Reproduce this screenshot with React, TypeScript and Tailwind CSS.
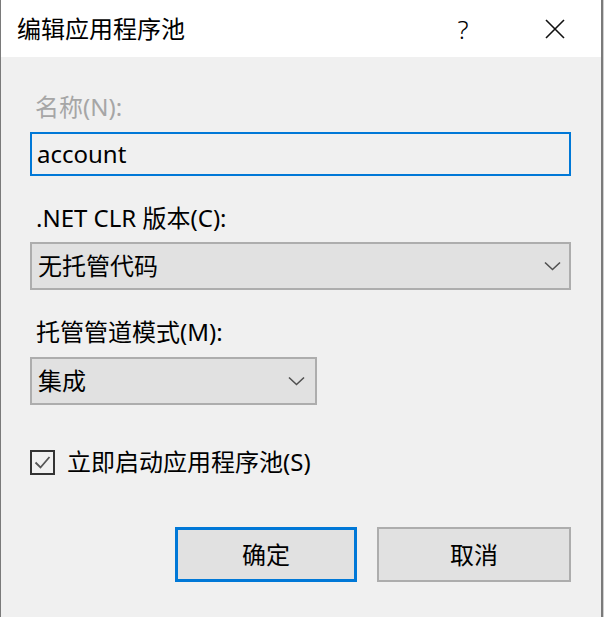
import React from "react";

const font = {
  fontFamily: '"Noto Sans", "Noto Sans CJK SC", sans-serif',
};

function Chevron() {
  return (
    <svg width="17" height="10" viewBox="0 0 17 10" fill="none">
      <polyline points="1,1.5 8.5,8.5 16,1.5" stroke="#505050" strokeWidth="1.6" />
    </svg>
  );
}

export default function App() {
  return (
    <div className="flex w-[604px] h-[617px] bg-[#f0f0f0]" style={font}>
      <div className="w-[1px] bg-[#7a7a7a]" />
      <div className="flex flex-col w-[600px]">
        {/* title bar */}
        <div className="h-[57px] bg-white flex items-center text-[24px] text-black">
          <div className="pl-[16px] flex-1 leading-[32px] pt-[1px]">编辑应用程序池</div>
          <div className="w-[20px] flex justify-center mr-[72px] text-[26px] leading-[32px] font-light">?</div>
          <div className="w-[20px] mr-[36px] flex items-center justify-center">
            <svg width="20" height="20" viewBox="0 0 20 20">
              <path d="M1 1 L19 19 M19 1 L1 19" stroke="#111" strokeWidth="1.6" />
            </svg>
          </div>
        </div>
        {/* body */}
        <div className="flex-1 flex flex-col pl-[29px] pr-[30px] pt-[34px] text-[24px] leading-[32px]">
          <div className="pl-[5px] text-[#a6a6a6]">名称(N):</div>
          <div className="mt-[9px] h-[44px] border-2 border-[#0078d7] flex items-center pl-[5px] text-black">
            account
          </div>
          <div className="mt-[26px] pl-[6px] text-black">.NET CLR 版本(C):</div>
          <div className="mt-[8px] h-[48px] border-2 border-[#adadad] bg-[#e1e1e1] flex items-center pl-[6px] pr-[8px] text-black">
            <span className="flex-1">无托管代码</span>
            <Chevron />
          </div>
          <div className="mt-[26px] pl-[6px] text-black">托管管道模式(M):</div>
          <div className="mt-[9px] w-[287px] h-[48px] border-2 border-[#adadad] bg-[#e1e1e1] flex items-center pl-[6px] pr-[10px] text-black">
            <span className="flex-1">集成</span>
            <Chevron />
          </div>
          <div className="mt-[41px] flex items-center gap-[12px] text-black">
            <div className="w-[25px] h-[25px] border-2 border-[#333] flex items-center justify-center">
              <svg width="19" height="19" viewBox="0 0 19 19" fill="none">
                <polyline points="2.5,9.5 7.5,14.5 16.5,4" stroke="#555" strokeWidth="1.8" />
              </svg>
            </div>
            <span>立即启动应用程序池(S)</span>
          </div>
          <div className="mt-[49px] flex justify-end gap-[20px] text-black">
            <div className="w-[182px] h-[55px] border-[3px] border-[#0078d7] bg-[#e1e1e1] flex items-center justify-center">
              确定
            </div>
            <div className="w-[194px] h-[55px] border-2 border-[#adadad] bg-[#e1e1e1] flex items-center justify-center">
              取消
            </div>
          </div>
        </div>
      </div>
      <div className="w-[2px] bg-[#7a7a7a]" />
      <div className="w-[1px] bg-[#cfcfcf]" />
    </div>
  );
}
